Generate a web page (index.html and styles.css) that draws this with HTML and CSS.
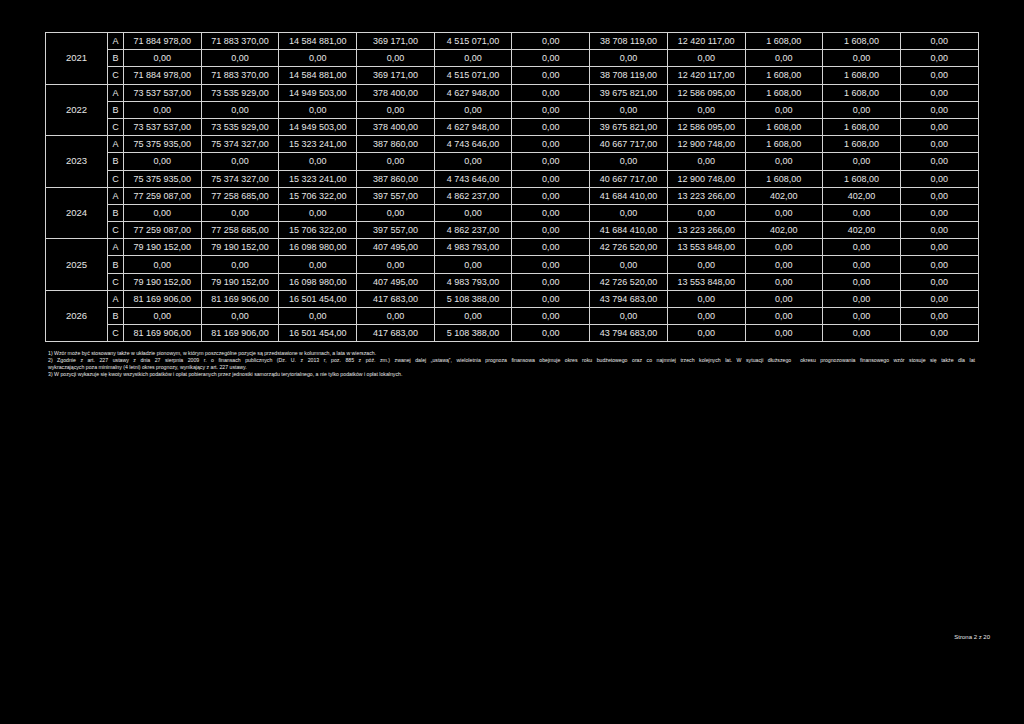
FILE: index.html
```html
<!DOCTYPE html>
<html lang="pl">
<head>
<meta charset="utf-8">
<title>Strona 2 z 20</title>
<link rel="stylesheet" href="styles.css">
</head>
<body>
<div class="page">
<table class="wpf">
<colgroup>
<col class="c-year"><col class="c-let">
<col class="c-d"><col class="c-d"><col class="c-d"><col class="c-d"><col class="c-d"><col class="c-d"><col class="c-d"><col class="c-d"><col class="c-d"><col class="c-d"><col class="c-d">
</colgroup>
<tbody>
<tr><td class="year" rowspan="3">2021</td><td>A</td><td>71 884 978,00</td><td>71 883 370,00</td><td>14 584 881,00</td><td>369 171,00</td><td>4 515 071,00</td><td>0,00</td><td>38 708 119,00</td><td>12 420 117,00</td><td>1 608,00</td><td>1 608,00</td><td>0,00</td></tr>
<tr><td>B</td><td>0,00</td><td>0,00</td><td>0,00</td><td>0,00</td><td>0,00</td><td>0,00</td><td>0,00</td><td>0,00</td><td>0,00</td><td>0,00</td><td>0,00</td></tr>
<tr><td>C</td><td>71 884 978,00</td><td>71 883 370,00</td><td>14 584 881,00</td><td>369 171,00</td><td>4 515 071,00</td><td>0,00</td><td>38 708 119,00</td><td>12 420 117,00</td><td>1 608,00</td><td>1 608,00</td><td>0,00</td></tr>

<tr><td class="year" rowspan="3">2022</td><td>A</td><td>73 537 537,00</td><td>73 535 929,00</td><td>14 949 503,00</td><td>378 400,00</td><td>4 627 948,00</td><td>0,00</td><td>39 675 821,00</td><td>12 586 095,00</td><td>1 608,00</td><td>1 608,00</td><td>0,00</td></tr>
<tr><td>B</td><td>0,00</td><td>0,00</td><td>0,00</td><td>0,00</td><td>0,00</td><td>0,00</td><td>0,00</td><td>0,00</td><td>0,00</td><td>0,00</td><td>0,00</td></tr>
<tr><td>C</td><td>73 537 537,00</td><td>73 535 929,00</td><td>14 949 503,00</td><td>378 400,00</td><td>4 627 948,00</td><td>0,00</td><td>39 675 821,00</td><td>12 586 095,00</td><td>1 608,00</td><td>1 608,00</td><td>0,00</td></tr>

<tr><td class="year" rowspan="3">2023</td><td>A</td><td>75 375 935,00</td><td>75 374 327,00</td><td>15 323 241,00</td><td>387 860,00</td><td>4 743 646,00</td><td>0,00</td><td>40 667 717,00</td><td>12 900 748,00</td><td>1 608,00</td><td>1 608,00</td><td>0,00</td></tr>
<tr><td>B</td><td>0,00</td><td>0,00</td><td>0,00</td><td>0,00</td><td>0,00</td><td>0,00</td><td>0,00</td><td>0,00</td><td>0,00</td><td>0,00</td><td>0,00</td></tr>
<tr><td>C</td><td>75 375 935,00</td><td>75 374 327,00</td><td>15 323 241,00</td><td>387 860,00</td><td>4 743 646,00</td><td>0,00</td><td>40 667 717,00</td><td>12 900 748,00</td><td>1 608,00</td><td>1 608,00</td><td>0,00</td></tr>

<tr><td class="year" rowspan="3">2024</td><td>A</td><td>77 259 087,00</td><td>77 258 685,00</td><td>15 706 322,00</td><td>397 557,00</td><td>4 862 237,00</td><td>0,00</td><td>41 684 410,00</td><td>13 223 266,00</td><td>402,00</td><td>402,00</td><td>0,00</td></tr>
<tr><td>B</td><td>0,00</td><td>0,00</td><td>0,00</td><td>0,00</td><td>0,00</td><td>0,00</td><td>0,00</td><td>0,00</td><td>0,00</td><td>0,00</td><td>0,00</td></tr>
<tr><td>C</td><td>77 259 087,00</td><td>77 258 685,00</td><td>15 706 322,00</td><td>397 557,00</td><td>4 862 237,00</td><td>0,00</td><td>41 684 410,00</td><td>13 223 266,00</td><td>402,00</td><td>402,00</td><td>0,00</td></tr>

<tr><td class="year" rowspan="3">2025</td><td>A</td><td>79 190 152,00</td><td>79 190 152,00</td><td>16 098 980,00</td><td>407 495,00</td><td>4 983 793,00</td><td>0,00</td><td>42 726 520,00</td><td>13 553 848,00</td><td>0,00</td><td>0,00</td><td>0,00</td></tr>
<tr><td>B</td><td>0,00</td><td>0,00</td><td>0,00</td><td>0,00</td><td>0,00</td><td>0,00</td><td>0,00</td><td>0,00</td><td>0,00</td><td>0,00</td><td>0,00</td></tr>
<tr><td>C</td><td>79 190 152,00</td><td>79 190 152,00</td><td>16 098 980,00</td><td>407 495,00</td><td>4 983 793,00</td><td>0,00</td><td>42 726 520,00</td><td>13 553 848,00</td><td>0,00</td><td>0,00</td><td>0,00</td></tr>

<tr><td class="year" rowspan="3">2026</td><td>A</td><td>81 169 906,00</td><td>81 169 906,00</td><td>16 501 454,00</td><td>417 683,00</td><td>5 108 388,00</td><td>0,00</td><td>43 794 683,00</td><td>0,00</td><td>0,00</td><td>0,00</td><td>0,00</td></tr>
<tr><td>B</td><td>0,00</td><td>0,00</td><td>0,00</td><td>0,00</td><td>0,00</td><td>0,00</td><td>0,00</td><td>0,00</td><td>0,00</td><td>0,00</td><td>0,00</td></tr>
<tr><td>C</td><td>81 169 906,00</td><td>81 169 906,00</td><td>16 501 454,00</td><td>417 683,00</td><td>5 108 388,00</td><td>0,00</td><td>43 794 683,00</td><td>0,00</td><td>0,00</td><td>0,00</td><td>0,00</td></tr>
</tbody>
</table>

<div class="notes">
<p>1) Wzór może być stosowany także w układzie pionowym, w którym poszczególne pozycje są przedstawione w kolumnach, a lata w wierszach.</p>
<p class="just">2) Zgodnie z art. 227 ustawy z dnia 27 sierpnia 2009 r. o finansach publicznych (Dz. U. z 2013 r, poz. 885 z póź. zm.) zwanej dalej „ustawą”, wieloletnia prognoza finansowa obejmuje okres roku budżetowego oraz co najmniej trzech kolejnych lat. W sytuacji dłuższego&nbsp; okresu prognozowania finansowego wzór stosuje się także dla lat</p>
<p>wykraczających poza minimalny (4 letni) okres prognozy, wynikający z art. 227 ustawy.</p>
<p>3) W pozycji wykazuje się kwoty wszystkich podatków i opłat pobieranych przez jednostki samorządu terytorialnego, a nie tylko podatków i opłat lokalnych.</p>
</div>

<div class="footer">Strona 2 z 20</div>
</div>
</body>
</html>
```

FILE: styles.css
```css
html, body {
  margin: 0;
  padding: 0;
  background: #000;
}
body {
  width: 1024px;
  height: 724px;
  overflow: hidden;
  font-family: "Liberation Sans", Arial, sans-serif;
  color: #e6e6e6;
}
.page {
  padding: 32px 0 0 45px;
  display: flex;
  flex-direction: column;
}
.wpf {
  border-collapse: collapse;
  table-layout: fixed;
  width: 933px;
  font-size: 9px;
}
.c-year { width: 62px; }
.c-let { width: 16px; }
.c-d { width: 77.7px; }
.wpf td {
  border: 1px solid #d4d4d4;
  height: 16.2px;
  padding: 0;
  text-align: center;
  vertical-align: middle;
  white-space: nowrap;
  line-height: 10px;
}
.wpf td.year {
  font-size: 9.5px;
}
.notes {
  margin-top: 8px;
  padding-left: 3px;
  font-size: 5.2px;
  line-height: 7px;
  color: #e8e8e8;
}
.notes p {
  margin: 0;
  white-space: nowrap;
}
.notes p.just {
  width: 927px;
  white-space: normal;
  text-align: justify;
  text-align-last: justify;
}
.footer {
  margin-top: 256px;
  align-self: flex-end;
  margin-right: 34px;
  font-size: 6px;
  color: #e8e8e8;
}
```
